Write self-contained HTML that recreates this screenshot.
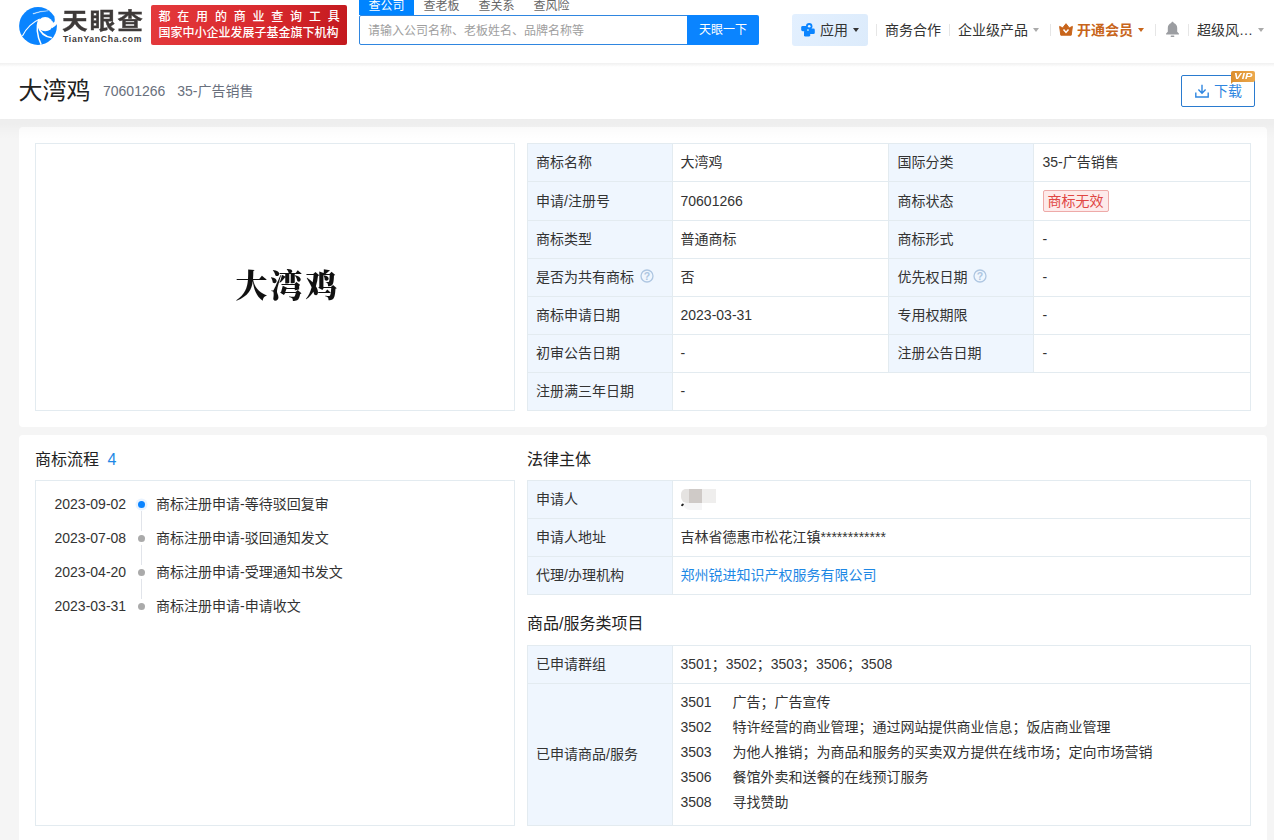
<!DOCTYPE html>
<html lang="zh-CN">
<head>
<meta charset="utf-8">
<title>大湾鸡 - 商标信息 - 天眼查</title>
<style>
*{box-sizing:border-box;margin:0;padding:0}
html,body{width:1274px;height:840px;overflow:hidden;background:#f5f5f5}
body{font-family:"Liberation Sans","Noto Sans CJK SC",sans-serif;font-size:14px;color:#333;position:relative;line-height:20px}
.abs{position:absolute;white-space:nowrap}
#hdr{position:absolute;left:0;top:0;width:1274px;height:63px;background:#fff}
#hshadow{position:absolute;left:0;top:63px;width:1274px;height:4px;background:linear-gradient(#f0f0f0,#fff)}
#sub{position:absolute;left:0;top:67px;width:1274px;height:52px;background:#fff}
#shade{position:absolute;left:0;top:119px;width:1274px;height:20px;z-index:5;pointer-events:none;background:linear-gradient(rgba(0,0,0,.03) 0,rgba(0,0,0,.028) 30%,rgba(0,0,0,.012) 60%,rgba(0,0,0,0) 100%)}
.card{position:absolute;left:19px;width:1248px;background:#fff;border-radius:4px}
.box{position:absolute;border:1px solid #e3ebf0;background:#fff}
table{border-collapse:collapse;position:absolute;table-layout:fixed;font-size:14px}
td{border:1px solid #e3ebf0;height:38px;padding:0 8px 2px 7.5px;vertical-align:middle;color:#333;white-space:nowrap;line-height:20px}
td.l{background:#eff6fe}
tr.r2 td{padding-bottom:0}
td.l{padding-left:8px}
#t1 td:nth-child(3){padding-left:8.5px}
#t1 td:nth-child(4){padding-left:8.5px}
.tag{display:inline-block;height:22px;line-height:20px;padding:0 4px;border:1px solid #eeaaa8;background:#fdeaea;color:#e04643;border-radius:2px;font-size:14px;vertical-align:middle}
.q{display:inline-block;width:14px;height:14px;vertical-align:middle;margin-left:5.5px;position:relative;top:-1.6px}
.sep{position:absolute;top:24px;width:1px;height:12px;background:#e6e6e6}
.nav{position:absolute;top:20px;line-height:20px;font-size:14px;color:#333;white-space:nowrap}
.caret{position:absolute;width:0;height:0;border-left:3.5px solid transparent;border-right:3.5px solid transparent;border-top:4px solid #aaa}
.tab{position:absolute;top:-5px;height:20px;line-height:22.5px;width:55px;text-align:center;font-size:12px;color:#666}
.tl-date{position:absolute;left:54.5px;font-size:14px;line-height:20px;color:#333;white-space:nowrap}
.tl-txt{position:absolute;left:156px;font-size:14px;line-height:20px;color:#333;white-space:nowrap}
.dot{position:absolute;left:138px;width:7px;height:7px;border-radius:50%;background:#aaa}
.g{position:absolute;left:680.5px;font-size:14px;line-height:20px;color:#333;white-space:nowrap}
.g b{font-weight:normal;display:inline-block;width:52px}
</style>
</head>
<body>
<div id="hdr"></div>
<div id="hshadow"></div>
<div id="sub"></div>
<div id="shade"></div>

<!-- logo -->
<svg class="abs" style="left:19px;top:7px" width="38" height="38" viewBox="0 0 38 38">
<circle cx="19" cy="19" r="18.9" fill="#0a84ff"/>
<ellipse cx="26.2" cy="17.2" rx="7.7" ry="7.1" fill="#fff"/>
<path d="M32.8 13.2 Q34 15 33.6 15.6 Q35 15.6 35.6 14.4 Q36 12.6 35.4 10.2 L38.8 10 L38.8 17.6 L37.7 17.3 Q36.2 19.8 33 21.2 L32.8 21 Z" fill="#fff"/>
<path d="M13.9 6.5 Q20.5 3.8 29.3 3.7 Q20.5 4.6 14.2 7.1 Z" fill="#fff" stroke="#fff" stroke-width=".3"/>
<path d="M3.4 29 Q9.4 17 20.8 12" stroke="#fff" stroke-width="1.1" fill="none"/>
<path d="M19.8 12.6 Q15.6 24 22.2 37.6" stroke="#fff" stroke-width="1.5" fill="none"/>
<path d="M19.4 19.5 Q22 29 32.8 30.8" stroke="#fff" stroke-width="1.6" fill="none"/>
</svg>
<div class="abs" style="left:61.6px;top:5.5px;font-size:22.5px;line-height:32px;font-weight:700;-webkit-text-stroke:0.35px #3e3a39;color:#3e3a39;letter-spacing:1.7px;transform-origin:0 0;transform:scaleX(1.14)">天眼查</div>
<div class="abs" style="left:63px;top:32.7px;font-size:8.6px;line-height:12px;font-weight:bold;color:#3e3a39;letter-spacing:0.72px">TianYanCha.com</div>

<!-- red banner -->
<div class="abs" style="left:151px;top:5px;width:196px;height:40px;border-radius:2px;background:linear-gradient(100deg,#e4393c 0%,#d92a2e 55%,#c3191e 100%)"></div>
<div class="abs" style="left:158.5px;top:8px;font-size:12px;line-height:18px;color:#fff;letter-spacing:6.8px;font-weight:500">都在用的商业查询工具</div>
<div class="abs" style="left:158.5px;top:23.5px;font-size:12px;line-height:18px;color:#fff;font-weight:500">国家中小企业发展子基金旗下机构</div>

<!-- search -->
<div class="tab" style="left:359px;background:#0084ff;color:#fff">查公司</div>
<div class="tab" style="left:414px">查老板</div>
<div class="tab" style="left:469px">查关系</div>
<div class="tab" style="left:524px">查风险</div>
<div class="abs" style="left:359px;top:15px;width:330px;height:30px;border:1px solid #2f86e0;border-radius:2px 0 0 2px;background:#fff"></div>
<div class="abs" style="left:368px;top:22px;font-size:12px;line-height:18px;color:#9e9e9e">请输入公司名称、老板姓名、品牌名称等</div>
<div class="abs" style="left:687px;top:15px;width:72px;height:30px;background:#0a84ff;border-radius:0 2px 2px 0;color:#fff;font-size:12px;line-height:31px;text-align:center">天眼一下</div>

<!-- nav -->
<div class="abs" style="left:792px;top:14px;width:76px;height:32px;border-radius:3px;background:linear-gradient(120deg,#e3f0ff,#dcebfb)"></div>
<svg class="abs" style="left:801px;top:23px" width="14" height="14" viewBox="0 0 14 14">
<g fill="#0a84ff"><circle cx="8.2" cy="3.2" r="3.2"/><rect x="0.2" y="3" width="7.4" height="5.2" rx="1.4"/><rect x="7.6" y="5.5" width="6.2" height="5.6" rx="1.4"/><rect x="3" y="7.6" width="6.2" height="6" rx="1.4"/><rect x="5" y="4" width="5" height="6"/></g>
<circle cx="8.2" cy="3.2" r="1.3" fill="#e6f3ff"/><rect x="6" y="6" width="1.9" height="1.9" rx=".4" fill="#8fd0ff"/>
</svg>
<div class="nav" style="left:820px">应用</div>
<div class="caret" style="left:852.5px;top:28px;border-top-color:#333"></div>
<div class="sep" style="left:876px"></div>
<div class="nav" style="left:885px">商务合作</div>
<div class="sep" style="left:949px"></div>
<div class="nav" style="left:958px">企业级产品</div>
<div class="caret" style="left:1033px;top:28px"></div>
<div class="sep" style="left:1050px"></div>
<svg class="abs" style="left:1059px;top:23px" width="14" height="13" viewBox="0 0 14 13">
<path d="M0.6 3.4 L3.7 4.9 L7 0.7 L10.3 4.9 L13.4 3.4 L12.2 12.2 L1.8 12.2 Z" fill="#c8651b" stroke="#c8651b" stroke-width="1" stroke-linejoin="round"/>
<path d="M4.5 6.4 L7 9.4 L9.5 6.4" stroke="#fff" stroke-width="1.5" fill="none"/>
</svg>
<div class="nav" style="left:1077px;color:#c8651b;font-weight:bold">开通会员</div>
<div class="caret" style="left:1137.5px;top:28px;border-top-color:#c8651b"></div>
<div class="sep" style="left:1155px"></div>
<svg class="abs" style="left:1165px;top:21px" width="15" height="17" viewBox="0 0 15 17">
<path d="M7.5 0.8 C8.3 0.8 8.7 1.4 8.7 2 C11 2.7 12.2 4.7 12.2 7 L12.2 10.8 L13.9 12.6 L13.9 13.4 L1.1 13.4 L1.1 12.6 L2.8 10.8 L2.8 7 C2.8 4.7 4 2.7 6.3 2 C6.3 1.4 6.7 0.8 7.5 0.8 Z" fill="#9b9da1"/>
<rect x="5.6" y="14.6" width="3.8" height="1.4" rx="0.7" fill="#9b9da1"/>
</svg>
<div class="sep" style="left:1188px"></div>
<div class="nav" style="left:1197px">超级风…</div>
<div class="caret" style="left:1257.5px;top:28px"></div>

<!-- sub header -->
<div class="abs" style="left:18.6px;top:75.4px;font-size:24px;line-height:32px;color:#222">大湾鸡</div>
<div class="abs" style="left:103px;top:81px;font-size:14px;line-height:20px;color:#69707d">70601266</div>
<div class="abs" style="left:177.2px;top:81px;font-size:14px;line-height:20px;color:#69707d">35-广告销售</div>
<div class="abs" style="left:1181px;top:75px;width:74px;height:32px;border:1px solid #2a7bcf;border-radius:2px;background:#fff"></div>
<svg class="abs" style="left:1195px;top:84px" width="14" height="14" viewBox="0 0 14 14">
<path d="M7 0.8 V9 M3.4 5.6 L7 9.2 L10.6 5.6 M0.8 8.6 V13 H13.2 V8.6" stroke="#2f86e0" stroke-width="1.4" fill="none"/>
</svg>
<div class="abs" style="left:1214px;top:81px;font-size:14px;line-height:20px;color:#2f86e0">下载</div>
<div class="abs" style="left:1231px;top:71px;width:24px;height:11px;border-radius:2px 2px 2px 0;background:linear-gradient(90deg,#dc8e2e,#eca94c)"></div>
<div class="abs" style="left:1231px;top:81px;width:0;height:0;border-top:3px solid #dc8e2e;border-right:3px solid transparent"></div>
<div class="abs" style="left:1233.5px;top:70.3px;font-size:9px;line-height:12px;font-weight:bold;font-style:italic;color:#fff;letter-spacing:0.3px;transform-origin:0 50%;transform:scaleX(1.22)">VIP</div>

<!-- card 1 -->
<div class="card" style="top:127px;height:300px"></div>
<div class="box" style="left:35px;top:143px;width:480px;height:268px"></div>
<div class="abs" style="left:235.6px;top:262.9px;font-size:32px;line-height:40px;font-weight:900;color:#111;letter-spacing:2.7px;filter:blur(.35px);font-family:'Noto Serif CJK SC','Liberation Serif',serif">大湾鸡</div>

<table id="t1" style="left:527px;top:143px;width:723px">
<colgroup><col style="width:145px"><col style="width:216px"><col style="width:145px"><col style="width:217px"></colgroup>
<tr><td class="l">商标名称</td><td>大湾鸡</td><td class="l">国际分类</td><td>35-广告销售</td></tr>
<tr class="r2"><td class="l" style="height:39px">申请/注册号</td><td>70601266</td><td class="l">商标状态</td><td><span class="tag">商标无效</span></td></tr>
<tr><td class="l">商标类型</td><td>普通商标</td><td class="l">商标形式</td><td>-</td></tr>
<tr><td class="l">是否为共有商标<svg class="q" viewBox="0 0 14 14"><circle cx="7" cy="7" r="6" fill="none" stroke="#aec6e1" stroke-width="1.3"/><text x="7" y="10.6" text-anchor="middle" font-size="10.5" font-weight="bold" fill="#aec6e1" font-family="Liberation Sans, sans-serif">?</text></svg></td><td>否</td><td class="l">优先权日期<svg class="q" viewBox="0 0 14 14"><circle cx="7" cy="7" r="6" fill="none" stroke="#aec6e1" stroke-width="1.3"/><text x="7" y="10.6" text-anchor="middle" font-size="10.5" font-weight="bold" fill="#aec6e1" font-family="Liberation Sans, sans-serif">?</text></svg></td><td>-</td></tr>
<tr><td class="l">商标申请日期</td><td>2023-03-31</td><td class="l">专用权期限</td><td>-</td></tr>
<tr><td class="l">初审公告日期</td><td>-</td><td class="l">注册公告日期</td><td>-</td></tr>
<tr><td class="l">注册满三年日期</td><td colspan="3">-</td></tr>
</table>

<!-- card 2 -->
<div class="card" style="top:435px;height:420px"></div>
<div class="abs" style="left:35px;top:449px;font-size:16px;line-height:22px;color:#222">商标流程</div>
<div class="abs" style="left:107.5px;top:449px;font-size:16px;line-height:22px;color:#1e88e5">4</div>
<div class="box" style="left:35px;top:480px;width:480px;height:346px"></div>
<div class="abs" style="left:141px;top:511px;width:1px;height:20px;background:#e1e4ea"></div>
<div class="abs" style="left:141px;top:545px;width:1px;height:20px;background:#e1e4ea"></div>
<div class="abs" style="left:141px;top:579px;width:1px;height:20px;background:#e1e4ea"></div>
<div class="tl-date" style="top:494px">2023-09-02</div><div class="dot" style="top:501px;background:#0a84ff;box-shadow:0 0 0 2.5px #e9f3ff"></div><div class="tl-txt" style="top:494px">商标注册申请-等待驳回复审</div>
<div class="tl-date" style="top:528px">2023-07-08</div><div class="dot" style="top:535px"></div><div class="tl-txt" style="top:528px">商标注册申请-驳回通知发文</div>
<div class="tl-date" style="top:562px">2023-04-20</div><div class="dot" style="top:569px"></div><div class="tl-txt" style="top:562px">商标注册申请-受理通知书发文</div>
<div class="tl-date" style="top:596px">2023-03-31</div><div class="dot" style="top:603px"></div><div class="tl-txt" style="top:596px">商标注册申请-申请收文</div>

<div class="abs" style="left:527px;top:449px;font-size:16px;line-height:22px;color:#222">法律主体</div>
<table style="left:527px;top:480px;width:723px">
<colgroup><col style="width:145px"><col style="width:578px"></colgroup>
<tr><td class="l">申请人</td><td></td></tr>
<tr><td class="l">申请人地址</td><td>吉林省德惠市松花江镇************</td></tr>
<tr><td class="l">代理/办理机构</td><td style="color:#1e88e5">郑州锐进知识产权服务有限公司</td></tr>
</table>
<div class="abs" style="left:681px;top:489px;width:8px;height:14px;background:#e5e3e1;border-radius:5px 0 0 6px"></div>
<div class="abs" style="left:689px;top:489px;width:13px;height:14px;background:#cfcac7"></div>
<div class="abs" style="left:702px;top:489px;width:14px;height:14px;background:#efeeed"></div>
<div class="abs" style="left:683px;top:503px;width:19px;height:7px;background:#f5f5f6;border-radius:0 0 0 7px"></div>
<div class="abs" style="left:681px;top:503.6px;width:2.6px;height:2px;background:#222;border-radius:1px;transform:rotate(-40deg)"></div>

<div class="abs" style="left:527px;top:613px;font-size:16px;line-height:22px;color:#222">商品/服务类项目</div>
<table style="left:527px;top:645px;width:723px">
<colgroup><col style="width:145px"><col style="width:578px"></colgroup>
<tr><td class="l">已申请群组</td><td>3501；3502；3503；3506；3508</td></tr>
<tr><td class="l" style="height:142px">已申请商品/服务</td><td></td></tr>
</table>
<div class="g" style="top:692px"><b>3501</b>广告；广告宣传</div>
<div class="g" style="top:717px"><b>3502</b>特许经营的商业管理；通过网站提供商业信息；饭店商业管理</div>
<div class="g" style="top:742px"><b>3503</b>为他人推销；为商品和服务的买卖双方提供在线市场；定向市场营销</div>
<div class="g" style="top:767px"><b>3506</b>餐馆外卖和送餐的在线预订服务</div>
<div class="g" style="top:792px"><b>3508</b>寻找赞助</div>
</body>
</html>
